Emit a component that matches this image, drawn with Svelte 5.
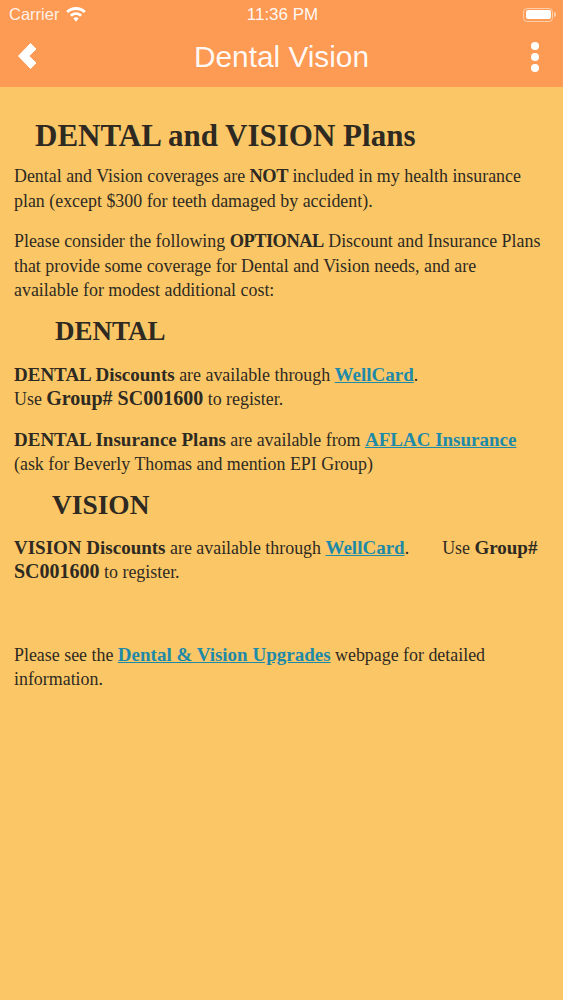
<script lang="ts">
  const title = "Dental Vision"
</script>

<div class="screen">
  <header>
    <div class="status">
      <div class="carrier">
        <span>Carrier</span>
        <svg width="20" height="15" viewBox="0 0 20 15" fill="#fff">
          <path d="M10 0C6.2 0 2.8 1.5.2 4l1.9 2.1C4.200 4.100 7 2.900 10 2.900s5.800 1.200 7.900 3.200L19.800 4C17.200 1.500 13.800 0 10 0z" />
          <path d="M10 5.200c-2.400 0-4.500.9-6.100 2.500l2 2.100c1.100-1 2.500-1.700 4.100-1.700s3 .7 4.100 1.700l2-2.100C14.500 6.100 12.400 5.200 10 5.200z" />
          <path d="M10 10.200c-1.100 0-2 .4-2.700 1.100L10 14.800l2.700-3.500c-.7-.7-1.600-1.100-2.700-1.100z" />
        </svg>
      </div>
      <span class="time">11:36 PM</span>
      <div class="battery"><div class="cell"><i></i></div><em></em></div>
    </div>
    <nav>
      <svg class="back" width="19" height="26" viewBox="0 0 19 26">
        <path d="M12.500 .5 L18 6 L11 13 L18 20 L12.500 25.500 L.5 13 Z" fill="#fff" stroke="#fff" stroke-width="1" stroke-linejoin="round" />
      </svg>
      <h1>{title}</h1>
      <div class="dots"><i></i><i></i><i></i></div>
    </nav>
  </header>

  <main>
    <h2 class="top">DENTAL and VISION Plans</h2>
    <p>Dental and Vision coverages are <b class="caps">NOT</b> included in my health insurance plan (except $300 for teeth damaged by accident).</p>
    <p>Please consider the following <b class="caps">OPTIONAL</b> Discount and Insurance Plans that provide some coverage for Dental and Vision needs, and are<br />available for modest additional cost:</p>
    <h2 class="dental">DENTAL</h2>
    <p><b>DENTAL Discounts</b> are available through <a href="#wellcard">WellCard</a>.<br />Use <b class="code">Group# SC001600</b> to register.</p>
    <p><b>DENTAL Insurance Plans</b> are available from <a href="#aflac">AFLAC Insurance</a><br />(ask for Beverly Thomas and mention EPI Group)</p>
    <h2 class="vision">VISION</h2>
    <p><b>VISION Discounts</b> are available through <a href="#wellcard">WellCard</a>.<span class="gap"></span>Use <b>Group#</b><br /><b class="code">SC001600</b> to register.</p>
    <p class="last">Please see the <a href="#upgrades">Dental &amp; Vision Upgrades</a> webpage for detailed information.</p>
  </main>
</div>

<style>
  :global(body) {
    margin: 0;
    background: #fbc766;
  }

  .screen {
    display: flex;
    flex-direction: column;
    height: 1000px;
    overflow: hidden;
    font-family: "Liberation Serif", serif;
  }

  header {
    background: #fd9a54;
    color: #fff;
    height: 87px;
    font-family: "Liberation Sans", sans-serif;
    flex: none;
  }

  .status {
    display: grid;
    grid-template-columns: 1fr auto 1fr;
    align-items: center;
    height: 29px;
    padding: 0 7px 0 9px;
    font-size: 16.5px;
  }

  .carrier {
    display: flex;
    align-items: center;
    gap: 7px;
    color: rgba(255, 255, 255, 0.88);
  }

  .time {
    font-size: 17px;
    color: rgba(255, 255, 255, 0.95);
  }

  .battery {
    justify-self: end;
    display: flex;
    align-items: center;
    gap: 1px;
  }

  .cell {
    width: 30px;
    height: 14px;
    box-sizing: border-box;
    border: 1px solid rgba(255, 255, 255, 0.5);
    border-radius: 4px;
    padding: 1.5px;
  }

  .cell i {
    display: block;
    height: 100%;
    background: #fff;
    border-radius: 2px;
  }

  .battery em {
    width: 2px;
    height: 5px;
    background: rgba(255, 255, 255, 0.5);
    border-radius: 0 2px 2px 0;
  }

  nav {
    display: grid;
    grid-template-columns: 1fr auto 1fr;
    align-items: center;
    height: 58px;
    padding: 0 24px 2px;
    box-sizing: border-box;
  }

  nav h1 {
    margin: 0;
    font-size: 29.8px;
    font-weight: 400;
    color: rgba(255, 255, 255, 0.95);
  }

  .back {
    margin: -2px 0 0 -6px;
  }

  .dots {
    justify-self: end;
    display: flex;
    flex-direction: column;
    gap: 3px;
  }

  .dots i {
    width: 8px;
    height: 8px;
    border-radius: 50%;
    background: #fff;
  }

  main {
    flex: 1;
    background: #fbc766;
    color: #2e2a22;
    padding: 33px 14px 0;
    font-size: 17.9px;
    line-height: 24.5px;
  }

  h2 {
    margin: 0;
    line-height: 32px;
    font-weight: 700;
  }

  .top {
    font-size: 31px;
    padding-left: 21px;
    margin-bottom: 12px;
  }

  .dental {
    padding-left: 41px;
    font-size: 27px;
    margin-top: -4px;
    margin-bottom: 16px;
  }

  .vision {
    padding-left: 38px;
    font-size: 27.4px;
    margin-top: -4px;
    margin-bottom: 15px;
  }

  p {
    margin: 0 0 16px;
  }

  b {
    font-size: 19px;
    line-height: 1;
  }

  b.caps {
    font-size: 18.4px;
    letter-spacing: -0.5px;
  }

  b.code {
    font-size: 20px;
  }

  a {
    color: #1f8aa8;
    font-size: 19px;
    line-height: 1;
    font-weight: 700;
    text-decoration: underline;
  }

  .gap {
    display: inline-block;
    width: 33px;
  }

  .last {
    margin-top: 58px;
  }
</style>
